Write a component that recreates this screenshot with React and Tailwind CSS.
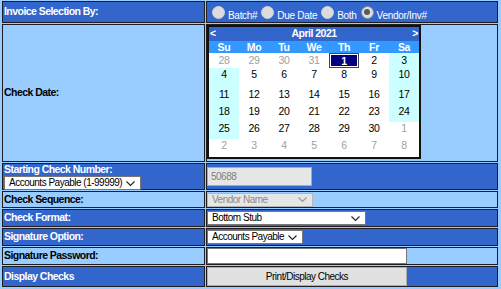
import React from 'react';

// Check printing form: invoice selection, date picker and check options
const weeks = [
  [{ d: 28, o: true }, { d: 29, o: true }, { d: 30, o: true }, { d: 31, o: true }, { d: 1, sel: true }, { d: 2 }, { d: 3 }],
  [{ d: 4 }, { d: 5 }, { d: 6 }, { d: 7 }, { d: 8 }, { d: 9 }, { d: 10 }],
  [{ d: 11 }, { d: 12 }, { d: 13 }, { d: 14 }, { d: 15 }, { d: 16 }, { d: 17 }],
  [{ d: 18 }, { d: 19 }, { d: 20 }, { d: 21 }, { d: 22 }, { d: 23 }, { d: 24 }],
  [{ d: 25 }, { d: 26 }, { d: 27 }, { d: 28 }, { d: 29 }, { d: 30 }, { d: 1, o: true }],
  [{ d: 2, o: true }, { d: 3, o: true }, { d: 4, o: true }, { d: 5, o: true }, { d: 6, o: true }, { d: 7, o: true }, { d: 8, o: true }],
];
const rowHeights = ['h-[15px] pt-[1px]', 'h-[20px]', 'h-[17px]', 'h-[17px]', 'h-[17px]', 'h-[17px]'];

const Chevron = ({ color = '#222' }) => (
  <svg width="9" height="5" viewBox="0 0 9 5" className="shrink-0">
    <polyline points="0.5,0.5 4.5,4.5 8.5,0.5" fill="none" stroke={color} strokeWidth="1.1" />
  </svg>
);

const Radio = ({ label, checked }) => (
  <div className="flex items-center">
    <span className={`w-[13px] h-[13px] rounded-full flex items-center justify-center border ${checked ? 'border-[#8f8f8f] bg-[#dedede]' : 'border-[#cfcfcf] bg-[#dcdcdc]'}`}>
      {checked && <span className="w-[6px] h-[6px] rounded-full bg-[#5a5a5a]"></span>}
    </span>
    <span className="ml-[3px] mr-[4px] mt-[6px] text-white text-[10px] tracking-[-0.3px]">{label}</span>
  </div>
);

const Select = ({ text, w, disabled }) => (
  <div className={`${w} h-[14px] flex items-center justify-between pl-[4px] pr-[5px] border text-[10px] leading-none tracking-[-0.5px] ${disabled ? 'bg-[#e6e6e6] border-[#b5b5b5] text-[#8a8a8a]' : 'bg-white border-[#767676] text-black'}`}>
    <span>{text}</span>
    <Chevron color={disabled ? '#999' : '#222'} />
  </div>
);

const Row = ({ h, dark, label, children, leftCol }) => (
  <div className={`flex gap-px ${h}`}>
    <div className={`w-[203px] border border-[#1e1e24] flex flex-col justify-center pl-[1px] font-bold text-[10.5px] tracking-[-0.55px] ${dark ? 'bg-[#3366cc] text-white' : 'bg-[#99ccff] text-black'}`}>
      {leftCol || label}
    </div>
    <div className={`flex-1 border border-[#1e1e24] flex items-center ${dark ? 'bg-[#3366cc]' : 'bg-[#99ccff]'}`}>
      {children}
    </div>
  </div>
);

function Calendar() {
  return (
    <div className="w-[214px] h-[134px] border-2 border-[#111] bg-white self-start">
      <div className="h-[14px] bg-[#3366cc] flex items-center justify-between px-[1px] text-white font-bold text-[10.5px] tracking-[-0.5px]">
        <span>&lt;</span>
        <span>April 2021</span>
        <span>&gt;</span>
      </div>
      <div className="h-[12px] bg-[#3399ff] grid grid-cols-7 text-white font-bold text-[10.5px] leading-[12px] text-center tracking-[-0.3px]">
        {['Su', 'Mo', 'Tu', 'We', 'Th', 'Fr', 'Sa'].map(d => <span key={d}>{d}</span>)}
      </div>
      {weeks.map((wk, i) => (
        <div key={i} className="grid grid-cols-7 text-[10.5px] leading-[12px] text-center tracking-[-0.4px]">
          {wk.map((c, j) => {
            const weekend = (j === 0 || j === 6) && !c.o;
            if (c.sel) {
              return (
                <div key={j} className="h-[15px] border border-[#444] p-px">
                  <div className="h-full bg-[#000080] text-white font-bold flex items-center justify-center">{c.d}</div>
                </div>
              );
            }
            return (
              <div key={j} className={`${rowHeights[i]} ${weekend ? 'bg-[#ccffff]' : ''} ${c.o ? 'text-[#a0a0a0]' : 'text-black'}`}>
                {c.d}
              </div>
            );
          })}
        </div>
      ))}
    </div>
  );
}

export default function App() {
  return (
    <div className="w-[501px] h-[289px] bg-[#99ccff] pl-[2px] pr-[3px] pt-[1px] flex flex-col gap-px overflow-hidden font-['Liberation_Sans',Arial,sans-serif]">
      <Row h="h-[22px]" dark label="Invoice Selection By:">
        <div className="flex items-center pl-[5px]">
          <Radio label="Batch#" />
          <Radio label="Due Date" />
          <Radio label="Both" />
          <Radio label="Vendor/Inv#" checked />
        </div>
      </Row>
      <div className="flex gap-px h-[138px]">
        <div className="w-[203px] border border-[#1e1e24] bg-[#99ccff] flex items-center pl-[1px] font-bold text-[10.5px] tracking-[-0.55px] text-black">
          Check Date:
        </div>
        <div className="flex-1 border border-[#1e1e24] bg-[#99ccff] flex">
          <Calendar />
        </div>
      </div>
      <Row
        h="h-[27px]"
        dark
        leftCol={
          <div className="flex flex-col">
            <span className="leading-[11px] mt-[1px]">Starting Check Number:</span>
            <div className="mt-[1px] font-normal tracking-normal">
              <Select text="Accounts Payable (1-99999)" w="w-[137px]" />
            </div>
          </div>
        }
      >
        <div className="w-[105px] h-[19px] bg-[#e6e6e6] border border-[#a9a9a9] flex items-center pl-[3px] text-[10px] tracking-[-0.5px] text-[#808080]">
          50688
        </div>
      </Row>
      <Row h="h-[17px]" label="Check Sequence:">
        <Select text="Vendor Name" w="w-[106px]" disabled />
      </Row>
      <Row h="h-[18px]" dark label="Check Format:">
        <Select text="Bottom Stub" w="w-[159px]" />
      </Row>
      <Row h="h-[18px]" dark label="Signature Option:">
        <Select text="Accounts Payable" w="w-[96px]" />
      </Row>
      <Row h="h-[18px]" label="Signature Password:">
        <div className="w-[200px] h-[16px] bg-white border border-[#767676]"></div>
      </Row>
      <Row h="h-[21px]" dark label="Display Checks">
        <div className="w-[200px] h-[19px] bg-[#e1e1e1] border border-[#adadad] flex items-center justify-center text-[10px] tracking-[-0.5px] text-black">
          Print/Display Checks
        </div>
      </Row>
    </div>
  );
}
